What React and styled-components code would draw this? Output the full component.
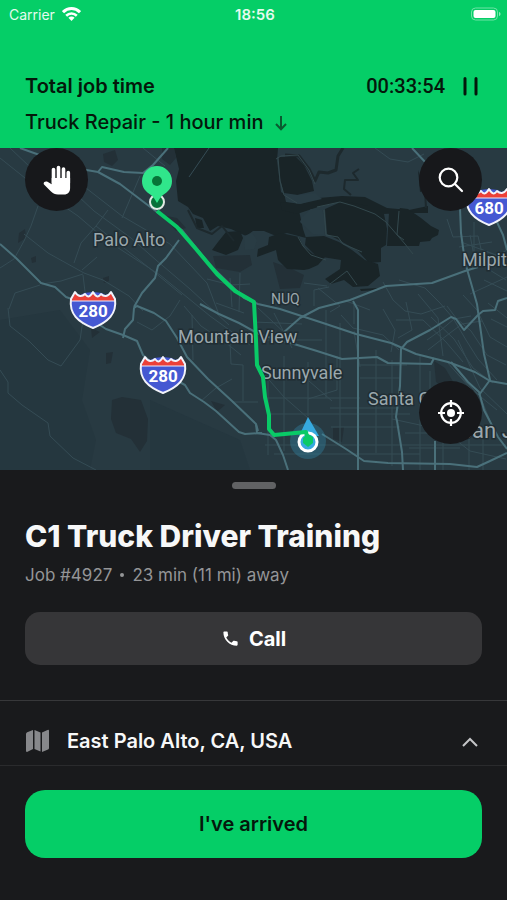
import React from 'react';
import styled, { createGlobalStyle } from 'styled-components';

const GlobalStyle = createGlobalStyle`
  *, *::before, *::after { box-sizing: border-box; }
  body { margin: 0; background: #191a1c; font-family: Inter, sans-serif; }
  button { font-family: inherit; border: 0; padding: 0; cursor: pointer; }
  h1, p { margin: 0; }
`;

const Screen = styled.main`
  display: flex;
  flex-direction: column;
  min-height: 100vh;
`;

const Header = styled.header`
  background: #05ce67;
  color: #04180b;
`;

const StatusBar = styled.div`
  display: grid;
  grid-template-columns: 1fr auto 1fr;
  align-items: center;
  height: 28px;
  padding: 0 6px 0 9px;
  color: #e4fbee;
  font-size: 14px;
`;

const Carrier = styled.span`
  display: flex;
  align-items: center;
  gap: 7px;
`;

const Clock = styled.span`
  font-weight: 600;
  font-size: 15px;
`;

const Battery = styled.svg`
  justify-self: end;
`;

const JobSummary = styled.div`
  display: flex;
  flex-direction: column;
  gap: 8px;
  padding: 44px 25px 12px;
`;

const SummaryRow = styled.div`
  display: flex;
  align-items: center;
  justify-content: ${(p) => (p.$spread ? 'space-between' : 'flex-start')};
  gap: 12px;
  min-height: 28px;
  font-size: 20px;
  line-height: 28px;
  font-weight: ${(p) => (p.$spread ? 600 : 500)};
`;

const Timer = styled.div`
  display: flex;
  align-items: center;
  gap: 17px;
  font-family: Roboto, sans-serif;
  font-weight: 500;
`;

const BareButton = styled.button`
  display: flex;
  align-items: center;
  background: transparent;
  color: inherit;
`;

const MapArea = styled.section`
  position: relative;
  display: flex;
  flex: 1 0 auto;
  flex-direction: column;
  justify-content: space-between;
  min-height: 322px;
  padding: 0 25px 26px;
  overflow: hidden;
`;

const MapDrawing = styled.svg`
  position: absolute;
  inset: 0;
  width: 100%;
  height: 100%;
`;

const MapControls = styled.div`
  position: relative;
  display: flex;
  justify-content: ${(p) => (p.$end ? 'flex-end' : 'space-between')};
`;

const RoundButton = styled.button`
  display: grid;
  place-items: center;
  width: 63px;
  height: 63px;
  border-radius: 50%;
  background: #17181b;
  color: #fff;
`;

const Sheet = styled.section`
  display: flex;
  flex-direction: column;
  background: #191a1c;
  color: #f7f8f8;
`;

const Handle = styled.div`
  align-self: center;
  width: 44px;
  height: 7px;
  margin-top: 12px;
  border-radius: 4px;
  background: #616264;
`;

const JobDetails = styled.div`
  padding: 27px 25px 35px;
`;

const Title = styled.h1`
  font-size: 30px;
  line-height: 40px;
  font-weight: 800;
`;

const Meta = styled.p`
  display: flex;
  align-items: center;
  gap: 8px;
  margin-top: 7px;
  color: #949597;
  font-size: 17px;
  line-height: 24px;
`;

const Dot = styled.span`
  width: 4px;
  height: 4px;
  border-radius: 50%;
  background: currentColor;
`;

const CallButton = styled.button`
  display: flex;
  align-items: center;
  justify-content: center;
  gap: 9px;
  width: 100%;
  height: 53px;
  margin-top: 25px;
  border-radius: 15px;
  background: #363638;
  color: #fff;
  font-size: 20px;
  font-weight: 700;
`;

const AddressButton = styled.button`
  display: flex;
  align-items: center;
  gap: 16px;
  height: 66px;
  padding: 15px 28px 0 25px;
  border-top: 1px solid #37383a;
  border-bottom: 1px solid #2a2b2d;
  background: transparent;
  color: #f7f8f8;
  font-size: 20px;
  font-weight: 600;
  text-align: left;
`;

const Address = styled.span`
  flex: 1;
`;

const Footer = styled.footer`
  padding: 24px 25px 42px;
`;

const ArrivedButton = styled.button`
  width: 100%;
  height: 68px;
  border-radius: 20px;
  background: #05ce67;
  color: #04180b;
  font-size: 20px;
  font-weight: 600;
`;

const MapLabel = styled.text`
  fill: #9ba8ad;
  stroke: #202d33;
  stroke-width: 3px;
  paint-order: stroke;
  font-family: Roboto, sans-serif;
  font-size: ${(p) => p.$size || 18}px;
`;

const ShieldNumber = styled.text`
  fill: #fff;
  font-family: Roboto, sans-serif;
  font-size: 17px;
  font-weight: 700;
  text-anchor: middle;
`;

const minorRoads = [
  'M0 158 40 190 78 216 106 240 160 275 210 316 250 345',
  'M10 148 30 167 60 181M38 206 31 226 24 241 14 259 0 268M24 234 48 253 84 273 103 280 129 296 143 311',
  'M74 263 81 243 96 226 108 210M82 270 97 257M62 181 94 211 131 238 156 260 190 289 229 325',
  'M77 181 122 216 170 244 207 283 218 312M122 218 140 176M96 226 148 267 182 295',
  'M40 285 15 293 9 309M83 274 61 281 42 284M83 275 86 300 80 340 61 366 48 360 29 341 10 326 8 308',
  'M0 370 8 382 8 393 22 405 48 423 50 436 73 458 96 470',
  'M137 322 152 330 170 316 180 300M184 306 201 326 225 342 241 355',
  'M192 315 193 360M230 342 231 364 243 365 243 401M201 401 216 388 232 379M232 402H258',
  'M209 148 189 177M143 148 165 166',
  'M230 278 232 307M240 273 239 312M207 279 231 285 250 284M216 303 244 313',
  'M258 308 288 336M254 322 302 324M260 340H322M274 313 292 348M263 398H360M270 414H410M265 445H506M274 454H420',
  'M268 367V455M284 356V451M308 362V416M326 310V398M340 323V444M376 350V453M392 360V466M430 371V398M420 354V470',
  'M341 315 353 328 383 335 399 350M337 356V390L308 399M359 365H407M360 378H401M330 408H399M331 427H400',
  'M309 381 332 401M263 373 284 397 308 418M354 331 360 367',
  'M329 287 314 290 314 306M318 288 340 306 330 312M346 301 370 310M354 302V324M383 309 395 330 391 352',
  'M399 280 425 288 440 303 453 318 466 340 478 359 497 380M383 282 393 300 405 311 421 314 445 306',
  'M406 302 412 330 398 338M418 294 438 318 443 356M447 306 456 318 471 331 487 355 506 365',
  'M463 295 477 310 490 337 507 347M431 317 454 339 473 368 493 383',
  'M396 320 423 320 446 342 463 362M427 340 441 330 454 319 471 316M428 350 446 336 462 324 482 321',
  'M447 219 453 237 478 236 481 249 499 257M470 235 475 261 506 280M459 247 492 242M474 222 474 269',
  'M482 264 507 250M484 280 507 291M488 303 507 318M491 319 507 327M470 294 507 277M461 242 507 259',
  'M458 340 480 388 507 414M455 371 480 396 491 423M447 362 471 389 497 410',
  'M392 419 443 430 470 451 506 459M405 433H449M409 448H460M443 420V470M469 439V470M483 436V470',
  'M375 148 390 159 408 162 424 154M304 283 327 286',
];

const mainRoads = [
  'M0 244 16 258 41 283 55 287 66 297 80 302 92 320 106 329 123 335 137 341 143 355 165 374 185 385 190 393 204 402 216 411 239 432 245 434 262 433',
  'M123 338 125 329 133 320 134 308 137 306 154 313 166 321 177 338 187 357 208 379 232 401 256 424 258 431',
  'M20 148 48 158 75 168 98 172 120 184 145 203 157 212 182 230 210 265 244 298 258 304 280 309 323 323 356 334 391 343 416 354 448 362 475 372 490 381 507 384',
  'M98 172 102 167 124 172 143 173 153 165 168 148',
  'M179 240 166 258 158 266 155 278 142 293 134 307',
  'M200 304 219 314 239 323 261 335 294 344 317 351 342 359 377 357 388 363 431 364 434 358',
  'M283 333 300 318 319 308 350 300 386 286 432 283 465 271 478 267',
  'M403 470 402 452 397 421 396 417 400 386 401 349 407 342 430 330 451 317 456 319 464 330 478 315 483 311 495 310 498 301 507 298',
  'M412 148 427 164 448 201 460 208 461 233 465 262 477 304 484 354 490 380 479 395',
  'M496 220 503 235 507 250',
  'M353 301 358 310V470',
  'M256 424 257 433 270 435 276 440 283 455 288 470',
  'M322 434 346 449 364 461 388 463 450 464 477 467 490 461 507 453',
  'M451 362 468 382 479 392 484 410 498 437 507 449M435 441V470',
];

function Shield({ x, y, number }) {
  return (
    <g transform={`translate(${x} ${y})`}>
      <path
        d="M-18-17C-15-14-12-13-9-16L0-17 9-16C12-13 15-14 18-17L22-10C24 5 15 13 0 19-15 13-24 5-22-10Z"
        fill="#4558d2"
      />
      <path
        d="M-18-16C-15-12-11-12-8-14-5-11-3-12 0-16 3-12 5-11 8-14 11-12 15-12 18-16L22-8H-22Z"
        fill="#ec4038"
      />
      <path d="M-22-8H22" stroke="#e9eafd" strokeWidth="1" />
      <path
        d="M-18-17C-15-12-11-12-8-15-5-11-3-12 0-17 3-12 5-11 8-15 11-12 15-12 18-17L22-10C24 5 15 13 0 19-15 13-24 5-22-10Z"
        fill="none"
        stroke="#f2f3fa"
        strokeWidth="2"
        strokeLinejoin="round"
      />
      <ShieldNumber x="0" y="8">{number}</ShieldNumber>
    </g>
  );
}

function RouteMap() {
  return (
    <MapDrawing viewBox="0 148 507 322" preserveAspectRatio="xMidYMid slice" role="img" aria-label="Route map">
      <rect x="-600" y="-400" width="1800" height="1400" fill="#283a42" />
      <g fill="#25373f">
        <path d="M0 320 60 310 90 350 82 400 96 440 90 470H0Z" />
        <path d="M150 400 240 440 250 470H150Z" />
      </g>
      <g fill="#233037">
        <path d="M112 400 122 397 141 400 148 419 147 441 140 452 131 439 116 433 111 419Z" />
        <path d="M103 154 115 150 118 160 112 166 104 162ZM19 233 25 229 26 238 18 243ZM103 278 109 276 109 281 104 283Z" />
        <path d="M31 258 36 256 36 262 32 263ZM91 328 100 332 92 338ZM106 353 113 352 111 363 106 364ZM211 401 225 405 217 412Z" />
        <path d="M162 148H174L176 158 170 165 162 159ZM162 215 177 218 186 228 176 231ZM434 361 445 368 455 385 448 391 436 382ZM333 428 344 427 342 442 333 439Z" />
        <path d="M213 256 250 255 252 265 240 272 216 268ZM273 262 290 268 304 275 300 288 280 289Z" />
      </g>
      <g fill="#192427">
        <path d="M174 148H278L277 161 281 192 296 202 300 215 303 229 306 238 287 233 276 236 264 231 253 231 246 236 231 229 218 226 210 231 203 218 193 214 188 207 178 201 176 181 179 169Z" />
        <path d="M278 157 296 157 304 165 312 181 314 191 297 195 284 195 280 178Z" />
        <path d="M280 202 300 204 319 198 342 196 365 197 387 208 409 210 428 206 428 213 402 213 383 214 362 206 336 203 318 207 297 214 282 210Z" />
        <path d="M325 209 343 201 368 206 384 214 387 229 386 245 381 248 381 262 369 263 358 251 339 240 327 234Z" />
        <path d="M389 213 398 213 400 208 408 209 421 218 431 226 439 230 438 235 432 238 430 241 420 242 419 246H387Z" />
        <path d="M269 237 281 233 299 237 303 246 313 254 325 257 318 265 309 269 304 270 287 269 278 260 276 250 257 257 258 249 268 245Z" />
        <path d="M306 237 324 236 339 242 352 250 365 260 378 264 380 276 368 286 353 287 344 280 331 284 325 279 340 269 341 260 316 256 305 245Z" />
        <path d="M218 242 226 232 240 231 243 238 238 250 226 255 212 250ZM195 218 202 220 204 228 197 228ZM360 289 378 288 377 290 361 291ZM418 170 425 190 420 192Z" />
      </g>
      <g fill="#293c44">
        <path d="M302 217 311 209 322 210 325 221 324 235 313 234 300 222Z" />
        <path d="M284 193 298 195 315 193 322 199 300 204 286 202Z" />
        <path d="M244 236 252 233 257 240 254 249 245 250Z" />
      </g>
      <g fill="none" stroke="#1d292d" strokeWidth="3" strokeLinejoin="round">
        <path d="M285 155 299 156 309 169 315 181 319 172 328 173 336 170 338 156 343 148" />
        <path d="M359 169 353 173 358 180 345 180 344 189 351 195" strokeWidth="2" />
        <path d="M426 208 425 190 420 182" strokeWidth="2" />
        <path d="M188 210 197 228 212 234 222 226 234 241" strokeWidth="2" />
      </g>
      <g fill="none" stroke="#33484d" strokeWidth="1">
        <path d="M278 157 280 181 284 195 297 203M276 159 281 156 298 155 309 170 315 184" />
        <path d="M317 207 340 202 354 206 375 214 386 222 405 244 413 254" />
        <path d="M324 210 326 235 338 237 343 244 362 252M399 211 397 235 404 240M298 237 303 246 311 255 326 260M330 284 347 271 357 285" />
      </g>
      <g fill="none" stroke="#354c55" strokeWidth="1" strokeLinejoin="round">
        {minorRoads.map((d) => <path key={d} d={d} />)}
      </g>
      <g fill="none" stroke="#4a707a" strokeWidth="2" strokeLinejoin="round">
        {mainRoads.map((d) => <path key={d} d={d} />)}
      </g>

      <MapLabel x="93" y="246">Palo Alto</MapLabel>
      <MapLabel x="271" y="304" $size={14}>NUQ</MapLabel>
      <MapLabel x="178" y="343">Mountain View</MapLabel>
      <MapLabel x="261" y="379">Sunnyvale</MapLabel>
      <MapLabel x="368" y="405">Santa Clara</MapLabel>
      <MapLabel x="462" y="266">Milpit</MapLabel>
      <MapLabel x="459" y="438" $size={22}>San J</MapLabel>
      <Shield x={93} y={309} number="280" />
      <Shield x={163} y={374} number="280" />
      <Shield x={489} y={206} number="680" />

      <circle cx="308" cy="441" r="18" fill="#3190b2" opacity=".35" />
      <path d="M308 417 299 436H319Z" fill="#36a9df" />
      <circle cx="308" cy="442" r="9" fill="#36a9df" stroke="#fff" strokeWidth="3" />
      <circle cx="157" cy="202" r="7" fill="#087039" stroke="#e2eae5" strokeWidth="2" />
      <path
        d="M157 211 177 227 196 249 217 274 235 291 254 302 256 340 257 365 263 377 265 397 269 415 269 429 274 435 306 432 308 441"
        fill="none" stroke="#09ca67" strokeWidth="4" strokeLinejoin="round"
      />
      <path d="M303 438 308 434 313 437 313 443 308 447 303 443Z" fill="#09ca67" />
      <path
        d="M157 166A15 15 0 0 0 142 181C142 188 146 192 151 195 154 197 155 200 157 203 159 200 160 197 163 195 168 192 172 188 172 181A15 15 0 0 0 157 166Z"
        fill="#30e68b"
      />
      <circle cx="157" cy="181" r="5" fill="#077438" />
    </MapDrawing>
  );
}

export default function App() {
  return (
    <>
      <GlobalStyle />
      <Screen>
        <Header>
          <StatusBar>
            <Carrier>
              Carrier
              <svg width="19" height="14" viewBox="0 0 19 14" aria-hidden="true">
                <g fill="none" stroke="#fff" strokeWidth="3">
                  <path d="M1 5.2C5.8.4 13.2.4 18 5.2" />
                  <path d="M4.2 8.7C7.2 5.8 11.8 5.8 14.8 8.7" strokeWidth="2.6" />
                </g>
                <path d="M6.4 10.7C8.2 9.1 10.8 9.1 12.6 10.7L9.5 14Z" fill="#fff" />
              </svg>
            </Carrier>
            <Clock>18:56</Clock>
            <Battery width="31" height="14" viewBox="0 0 31 14" role="img" aria-label="Battery full">
              <rect x="1.5" y="1" width="26" height="12" rx="4" fill="none" stroke="#6fe3a6" />
              <rect x="3.5" y="3" width="22" height="8" rx="2" fill="#fff" />
              <path d="M29 5C31 5.5 31 8.5 29 9Z" fill="#8be9b8" />
            </Battery>
          </StatusBar>
          <JobSummary>
            <SummaryRow $spread>
              <span>Total job time</span>
              <Timer>
                <time>00:33:54</time>
                <BareButton type="button" aria-label="Pause">
                  <svg width="20" height="20" viewBox="0 0 20 20" aria-hidden="true">
                    <path d="M3 2.5V18M14 2.5V18" stroke="currentColor" strokeWidth="3" strokeLinecap="round" />
                  </svg>
                </BareButton>
              </Timer>
            </SummaryRow>
            <SummaryRow>
              <span>Truck Repair - 1 hour min</span>
              <BareButton type="button" aria-label="Show job stages">
                <svg width="12" height="18" viewBox="0 0 12 18" fill="none" stroke="#0b5a30" strokeWidth="2" aria-hidden="true">
                  <path d="M6 3V16M1 11 6 16.200 11 11" />
                </svg>
              </BareButton>
            </SummaryRow>
          </JobSummary>
        </Header>

        <MapArea>
          <RouteMap />
          <MapControls>
            <RoundButton type="button" aria-label="Pan map">
              <svg width="28" height="30" viewBox="0 0 28 30" aria-hidden="true">
                <g fill="none" stroke="#fff" strokeWidth="3.600" strokeLinecap="round">
                  <path d="M10.500 18V4.500M15.500 17V2.500M20.500 17V4M25.300 18V7.500" />
                </g>
                <path d="M8.700 13H27.100V23C27.100 27 25 29.500 21 29.500H15C12 29.500 10 28.500 8 26.500L1 19.500C-.200 17.500 2 15.800 4.500 16.800L8.700 19.200Z" fill="#fff" />
              </svg>
            </RoundButton>
            <RoundButton type="button" aria-label="Search">
              <svg width="26" height="26" viewBox="0 0 26 26" fill="none" stroke="currentColor" strokeWidth="2.2" strokeLinecap="round" aria-hidden="true">
                <circle cx="10.500" cy="10.500" r="8.800" />
                <path d="M17 17 24 24" />
              </svg>
            </RoundButton>
          </MapControls>
          <MapControls $end>
            <RoundButton type="button" aria-label="Center on my location">
              <svg width="28" height="28" viewBox="0 0 28 28" fill="none" stroke="currentColor" strokeWidth="2.2" aria-hidden="true">
                <circle cx="14" cy="14" r="9.800" />
                <circle cx="14" cy="14" r="4" fill="currentColor" stroke="none" />
                <path d="M14 1V8M14 20V27M1 14H8M20 14H27" />
              </svg>
            </RoundButton>
          </MapControls>
        </MapArea>

        <Sheet>
          <Handle />
          <JobDetails>
            <Title>C1 Truck Driver Training</Title>
            <Meta>
              <span>Job #4927</span>
              <Dot />
              <span>23 min (11 mi) away</span>
            </Meta>
            <CallButton type="button">
              <svg width="19" height="19" viewBox="0 0 24 24" fill="currentColor" aria-hidden="true">
                <path d="M20 15.500c-1.250 0-2.450-.2-3.570-.570-.350-.110-.740-.030-1.020.240l-2.200 2.200c-2.830-1.440-5.150-3.750-6.590-6.590l2.200-2.210c.280-.260.360-.650.250-1C8.700 6.450 8.500 5.250 8.500 4c0-.550-.450-1-1-1H4c-.550 0-1 .450-1 1 0 9.390 7.610 17 17 17 .550 0 1-.450 1-1v-3.500c0-.550-.450-1-1-1z" />
              </svg>
              Call
            </CallButton>
          </JobDetails>
          <AddressButton type="button" aria-expanded="true">
            <svg width="26" height="24" viewBox="0 0 26 24" fill="#87888b" aria-hidden="true">
              <path d="M1 5Q1 3.800 2.200 3.200L8 1V20L2.500 22.700Q1 23.400 1 21.800ZM9.500 1 15.500 3.500V22.500L9.500 20ZM17 3.500 22.500.9Q24 .2 24 1.800V19Q24 20 23 20.500L17 23Z" />
            </svg>
            <Address>East Palo Alto, CA, USA</Address>
            <svg width="18" height="12" viewBox="0 0 18 12" fill="none" stroke="#c4c5c7" strokeWidth="2" aria-hidden="true">
              <path d="M2 11 9 4 16 11" />
            </svg>
          </AddressButton>
          <Footer>
            <ArrivedButton type="button">I've arrived</ArrivedButton>
          </Footer>
        </Sheet>
      </Screen>
    </>
  );
}
